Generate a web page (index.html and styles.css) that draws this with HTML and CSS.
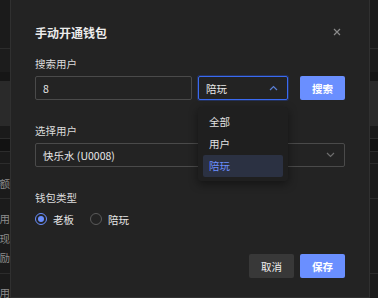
FILE: index.html
```html
<!DOCTYPE html>
<html lang="zh-CN">
  <head>
    <meta charset="utf-8"/>
    <title>手动开通钱包</title>
    <link rel="stylesheet" href="styles.css">
  </head>
  <body>
    <div class="page">
      <div class="row r1"></div>
      <div class="row r2"></div>
      <div class="row r3"></div>
      <div class="row r4"></div>
      <div class="row r5"></div>
      <div class="row r6"></div>
      <div class="row r7"></div>
      <div class="row r8"><span class="cell">金额</span></div>
      <div class="row r9">
        <span class="cell">可用</span>
        <span class="cell">提现</span>
        <span class="cell">激励</span>
      </div>
      <div class="row r10"><span class="cell">可用</span></div>
    </div>

    <div class="dialog">
      <div class="dialog-head">
        <span class="dialog-title">手动开通钱包</span>
        <span class="close">
          <svg width="8" height="8" viewBox="0 0 8 8"><path d="M1 1 L7 7 M7 1 L1 7" stroke="#8a8a8a" stroke-width="1.2"/></svg>
        </span>
      </div>

      <div class="form-item">
        <div class="label">搜索用户</div>
        <div class="search-row">
          <div class="input">8</div>
          <div class="select focused">
            <span>陪玩</span>
            <svg width="9" height="6" viewBox="0 0 9 6"><path d="M1 5 L4.5 1.5 L8 5" fill="none" stroke="#5a7fd6" stroke-width="1.2"/></svg>
            <div class="dropdown">
              <div class="option">全部</div>
              <div class="option">用户</div>
              <div class="option active">陪玩</div>
            </div>
          </div>
          <button class="btn primary">搜索</button>
        </div>
      </div>

      <div class="form-item">
        <div class="label">选择用户</div>
        <div class="select wide">
          <span>快乐水 (U0008)</span>
          <svg width="9" height="6" viewBox="0 0 9 6"><path d="M1 1 L4.5 4.5 L8 1" fill="none" stroke="#6e6e6e" stroke-width="1.2"/></svg>
        </div>
      </div>

      <div class="form-item">
        <div class="label">钱包类型</div>
        <div class="radios">
          <label class="radio checked"><span class="dot"></span>老板</label>
          <label class="radio"><span class="dot"></span>陪玩</label>
        </div>
      </div>

      <div class="footer">
        <button class="btn">取消</button>
        <button class="btn primary">保存</button>
      </div>
    </div>
  </body>
</html>
```

FILE: styles.css
```css
html, body {
  margin: 0;
  height: 100%;
  overflow: hidden;
}
body {
  background: #1b1b1b;
  font-family: "Noto Sans CJK SC", "Liberation Sans", sans-serif;
  color: #e4e4e4;
  position: relative;
}
.row {
  box-sizing: border-box;
  border-bottom: solid 1px #2c2c2c;
}
.r1 { height: 49px; background: #1b1b1b; }
.r2 { height: 23px; background: #1c1c1c; border-bottom: none; }
.r3 { height: 9px; background: #161616; border-bottom: none; }
.r4 { height: 45px; background: #2a2a2a; border-bottom: none; }
.r5 { height: 13px; background: #1a1a1a; }
.r6 { height: 13px; background: #121212; }
.r7 { height: 12px; background: #1a1a1a; }
.r8 { height: 35px; background: #1b1b1b; padding-top: 10px; }
.r9 { height: 75px; background: #1b1b1b; padding-top: 10px; }
.r10 { height: 24px; background: #1b1b1b; padding-top: 9px; border-bottom: none; }
.cell {
  display: flex;
  justify-content: flex-end;
  width: 10px;
  overflow: hidden;
  white-space: nowrap;
  font-size: 10.5px;
  line-height: 19.5px;
  color: #8c8c8c;
}

.dialog {
  position: absolute;
  left: 10px;
  top: -10px;
  width: 360px;
  height: 308px;
  box-sizing: border-box;
  background: #232323;
  border: solid 1px #303030;
  padding: 32px 24px 0 24px;
}
.dialog-head {
  display: flex;
  justify-content: space-between;
  align-items: center;
  height: 18px;
  margin-bottom: 14px;
}
.dialog-title {
  font-size: 12px;
  font-weight: bold;
  color: #ececec;
}
.close {
  display: flex;
  margin-right: 4px;
}
.form-item {
  margin-bottom: 22px;
}
.label {
  font-size: 10.5px;
  line-height: 17px;
  height: 17px;
  margin-bottom: 4px;
  color: #dcdcdc;
}
.search-row {
  display: flex;
  align-items: center;
  position: relative;
  z-index: 2;
}
.input, .select {
  box-sizing: border-box;
  height: 24px;
  border: solid 1px #4a4a4a;
  border-radius: 2px;
  padding: 0 7px;
  font-size: 10.5px;
  display: flex;
  align-items: center;
  color: #e8e8e8;
}
.input {
  width: 157px;
  margin-right: 6px;
}
.select {
  width: 90px;
  justify-content: space-between;
  position: relative;
  margin-right: 12px;
}
.select svg {
  margin-right: 2px;
}
.select.focused {
  border-color: #3a6af0;
  box-shadow: 0 0 0 1px rgba(40, 80, 200, 0.35);
}
.select.wide {
  width: 310px;
  margin-right: 0;
}
.dropdown {
  position: absolute;
  left: -1px;
  top: 30px;
  z-index: 5;
  width: 90px;
  box-sizing: border-box;
  padding: 4px 5px;
  background: #1f1f1f;
  border-radius: 3px;
  box-shadow: 0 3px 10px rgba(0, 0, 0, 0.45);
}
.option {
  height: 22px;
  line-height: 22px;
  padding: 0 6px;
  font-size: 10.5px;
  color: #e2e2e2;
  border-radius: 2px;
}
.option.active {
  background: #2b3142;
  color: #6b8fff;
}
.btn {
  box-sizing: border-box;
  height: 24px;
  width: 45px;
  border: none;
  border-radius: 2px;
  font-family: inherit;
  font-size: 10.5px;
  color: #f0f0f0;
  background: #383838;
  padding: 0;
}
.btn.primary {
  background: #6a8fff;
  color: #ffffff;
  font-weight: bold;
}
.radios {
  display: flex;
  align-items: center;
  height: 18px;
  margin-top: 4px;
}
.radio {
  display: flex;
  align-items: center;
  font-size: 10.5px;
  color: #e6e6e6;
  margin-right: 16px;
}
.dot {
  box-sizing: border-box;
  width: 12px;
  height: 12px;
  border-radius: 50%;
  border: solid 1px #5a5a5a;
  margin-right: 6px;
  position: relative;
}
.radio.checked .dot {
  border-color: #6a8fff;
}
.radio.checked .dot::after {
  content: "";
  position: absolute;
  left: 2px;
  top: 2px;
  width: 6px;
  height: 6px;
  border-radius: 50%;
  background: #6a8fff;
}
.footer {
  display: flex;
  justify-content: flex-end;
  gap: 6px;
  margin-top: 26px;
}
```
